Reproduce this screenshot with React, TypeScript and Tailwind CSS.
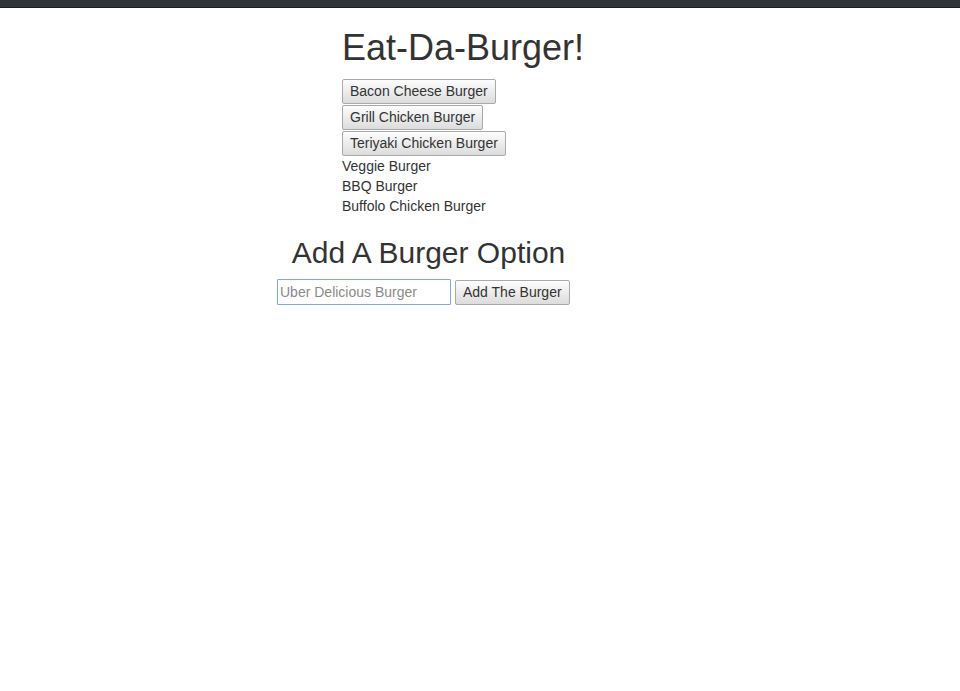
const burgers = ['Bacon Cheese Burger', 'Grill Chicken Burger', 'Teriyaki Chicken Burger'];
const devoured = ['Veggie Burger', 'BBQ Burger', 'Buffolo Chicken Burger'];

const btn =
  'h-[25px] px-[7px] border border-[#a9a9a9] rounded-[2px] bg-gradient-to-b from-[#fdfdfd] to-[#dcdcdc] text-[14px] leading-[20px] text-[#333]';

export default function App() {
  return (
    <div className="min-h-[691px] bg-white font-['Liberation_Sans',Arial,sans-serif] text-[14px] leading-[20px] text-[#333]">
      <div className="h-[8px] bg-[#2f3438] border-b border-[#1b1e20]" />

      <div className="pl-[342px]">
        <h1 className="mt-[20px] mb-[11px] text-[36px] leading-[1.1] font-normal">Eat-Da-Burger!</h1>
        <div className="flex flex-col items-start gap-[1px]">
          {burgers.map((b) => (
            <button key={b} className={btn}>
              {b}
            </button>
          ))}
        </div>
        <ul>
          {devoured.map((b) => (
            <li key={b}>{b}</li>
          ))}
        </ul>
      </div>

      <div className="w-[857px]">
        <h2 className="mt-[20px] mb-[10px] text-center text-[30px] leading-[33px] font-normal">
          Add A Burger Option
        </h2>
      </div>
      <form className="flex items-start gap-[4px] pl-[277px]" onSubmit={(e) => e.preventDefault()}>
        <input
          type="text"
          placeholder="Uber Delicious Burger"
          className="w-[174px] h-[26px] px-[2px] border border-[#7ea8e4] rounded-[1px] outline-none text-[14px] placeholder:text-[#8a8a8a]"
        />
        <button type="submit" className={btn + ' mt-[1px]'}>
          Add The Burger
        </button>
      </form>
    </div>
  );
}
